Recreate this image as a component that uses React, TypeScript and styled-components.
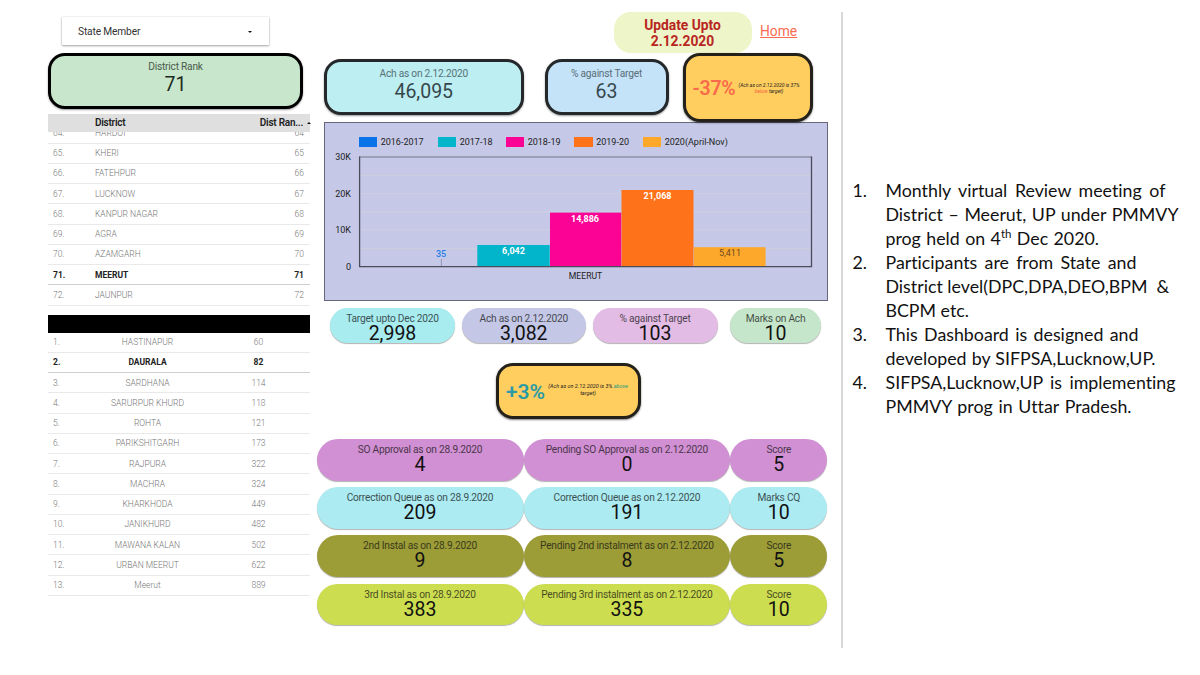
import React from "react";
import styled, { createGlobalStyle } from "styled-components";

const districts = [
  ["64.", "HARDOI", "64"],
  ["65.", "KHERI", "65"],
  ["66.", "FATEHPUR", "66"],
  ["67.", "LUCKNOW", "67"],
  ["68.", "KANPUR NAGAR", "68"],
  ["69.", "AGRA", "69"],
  ["70.", "AZAMGARH", "70"],
  ["71.", "MEERUT", "71"],
  ["72.", "JAUNPUR", "72"],
];

const blocks = [
  ["1.", "HASTINAPUR", "60"],
  ["2.", "DAURALA", "82"],
  ["3.", "SARDHANA", "114"],
  ["4.", "SARURPUR KHURD", "118"],
  ["5.", "ROHTA", "121"],
  ["6.", "PARIKSHITGARH", "173"],
  ["7.", "RAJPURA", "322"],
  ["8.", "MACHRA", "324"],
  ["9.", "KHARKHODA", "449"],
  ["10.", "JANIKHURD", "482"],
  ["11.", "MAWANA KALAN", "502"],
  ["12.", "URBAN MEERUT", "622"],
  ["13.", "Meerut", "889"],
];

const scores = [
  {
    color: "#d190d3",
    cells: [
      ["SO Approval as on 28.9.2020", "4"],
      ["Pending SO Approval as on 2.12.2020", "0"],
      ["Score", "5"],
    ],
  },
  {
    color: "#abebf1",
    cells: [
      ["Correction Queue as on 28.9.2020", "209"],
      ["Correction Queue as on 2.12.2020", "191"],
      ["Marks CQ", "10"],
    ],
  },
  {
    color: "#9d9d38",
    cells: [
      ["2nd Instal as on 28.9.2020", "9"],
      ["Pending 2nd instalment as on 2.12.2020", "8"],
      ["Score", "5"],
    ],
  },
  {
    color: "#cddd50",
    cells: [
      ["3rd Instal as on 28.9.2020", "383"],
      ["Pending 3rd instalment as on 2.12.2020", "335"],
      ["Score", "10"],
    ],
  },
];

const App = () => {
  return (
    <Page>
      <Global />
      <Left>
        <Select>
          State Member
          <Caret />
        </Select>
        <RankCard>
          <CardLabel>District Rank</CardLabel>
          <CardValue>71</CardValue>
        </RankCard>
        <TableHead>
          <span>District</span>
          <HeadRank>Dist Ran...</HeadRank>
          <SortMark />
        </TableHead>
        <DistrictList>
          {districts.map(([no, name, rank]) => (
            <DistrictRow key={no} $strong={name === "MEERUT"}>
              <span>{no}</span>
              <span>{name}</span>
              <Right>{rank}</Right>
            </DistrictRow>
          ))}
        </DistrictList>
        <BlackBar />
        {blocks.map(([no, name, rank]) => (
          <BlockRow key={no} $strong={name === "DAURALA"}>
            <span>{no}</span>
            <Center>{name}</Center>
            <Center>{rank}</Center>
          </BlockRow>
        ))}
      </Left>

      <Middle>
        <TopBar>
          <Update>
            Update Upto
            <br />
            2.12.2020
          </Update>
          <Home href="#">Home</Home>
        </TopBar>
        <Cards>
          <Card $width={199.5} $color="#bceef2">
            <CardLabel>Ach as on 2.12.2020</CardLabel>
            <CardValue>46,095</CardValue>
          </Card>
          <Card $width={124} $color="#c4e2f8">
            <CardLabel>% against Target</CardLabel>
            <CardValue>63</CardValue>
          </Card>
          <Delta $width={130.5} $height={69}>
            <DeltaValue $color="#f9694b">-37%</DeltaValue>
            <DeltaNote $width={67}>
              (Ach as on 2.12.2020 is 37% <Word $color="#f9593f">below</Word> target)
            </DeltaNote>
          </Delta>
        </Cards>
        <ChartBox>
          <Legend>
            <Key $width={79} $color="#0a73ea">2016-2017</Key>
            <Key $width={68} $color="#02b5cb">2017-18</Key>
            <Key $width={68.5} $color="#fb0496">2018-19</Key>
            <Key $width={68.5} $color="#fe7219">2019-20</Key>
            <Key $width={100} $color="#fda82b">2020(April-Nov)</Key>
          </Legend>
          <Chart />
        </ChartBox>
        <Pills>
          <Pill $width={125} $color="#a8ecf0">
            <PillLabel>Target upto Dec 2020</PillLabel>
            <PillValue>2,998</PillValue>
          </Pill>
          <Pill $width={124.5} $color="#c4c8e6">
            <PillLabel>Ach as on 2.12.2020</PillLabel>
            <PillValue>3,082</PillValue>
          </Pill>
          <Pill $width={125} $color="#e3bce5">
            <PillLabel>% against Target</PillLabel>
            <PillValue>103</PillValue>
          </Pill>
          <Pill $width={91} $color="#c5e6ca">
            <PillLabel>Marks on Ach</PillLabel>
            <PillValue>10</PillValue>
          </Pill>
        </Pills>
        <DeltaRow>
          <Delta $width={145} $height={55.5}>
            <DeltaValue $color="#2a9aa6" $large>+3%</DeltaValue>
            <DeltaNote $width={86} $large>
              (Ach as on 2.12.2020 is 3% <Word $color="#159a86">above</Word> target)
            </DeltaNote>
          </Delta>
        </DeltaRow>
        <Scores>
          {scores.map((row) =>
            row.cells.map(([label, value]) => (
              <Score key={row.color + label} $color={row.color}>
                <PillLabel>{label}</PillLabel>
                <PillValue>{value}</PillValue>
              </Score>
            ))
          )}
        </Scores>
      </Middle>

      <Notes>
        <Note>
          <span>1.</span>
          <div>
            <Line $width={280}>Monthly virtual Review meeting of</Line>
            <Line $width={293}>District – Meerut, UP under PMMVY</Line>
            <Line $width={213.5}>
              prog held on <Nth>4<sup>th</sup></Nth> Dec 2020.
            </Line>
          </div>
        </Note>
        <Note>
          <span>2.</span>
          <div>
            <Line $width={251}>Participants are from State and</Line>
            <Line $width={278}>District level(DPC,DPA,DEO,BPM &nbsp;&amp;</Line>
            <Line $width={83}>BCPM etc.</Line>
          </div>
        </Note>
        <Note>
          <span>3.</span>
          <div>
            <Line $width={253}>This Dashboard is designed and</Line>
            <Line $width={270}>developed by SIFPSA,Lucknow,UP.</Line>
          </div>
        </Note>
        <Note>
          <span>4.</span>
          <div>
            <Line $width={290}>SIFPSA,Lucknow,UP is implementing</Line>
            <Line $width={246}>PMMVY prog in Uttar Pradesh.</Line>
          </div>
        </Note>
      </Notes>
    </Page>
  );
};

const Chart = () => (
  <Plot viewBox="325 150 502 140">
    {[175.5, 193.5, 212, 230, 248.5].map((y) => (
      <path key={y} d={`M360 ${y}H811`} stroke="#cdcfdf" />
    ))}
    <path d="M359 157H812" stroke="#74768a" strokeWidth="1.2" />
    <rect x="477.3" y="245" width="72.4" height="21.5" fill="#02b5cb" />
    <rect x="550" y="212.6" width="71.3" height="54" fill="#fb0496" />
    <rect x="621.5" y="190" width="72" height="76.5" fill="#fe7219" />
    <rect x="694" y="247.2" width="71.6" height="19.5" fill="#fda82b" />
    <path d="M441.4 259v7" stroke="#9499b5" />
    <path d="M359.6 156.5V266.7H811.5V156.5" fill="none" stroke="#4a4c5c" strokeWidth="1.3" />
    <g textAnchor="end">
      <text x="351" y="160.2">30K</text>
      <text x="351" y="197">20K</text>
      <text x="351" y="233">10K</text>
      <text x="351" y="269.8">0</text>
    </g>
    <g textAnchor="middle">
      <text x="441" y="257" fill="#257fe8" fontWeight="500">35</text>
      <text x="513.5" y="254.3" fill="#fff" fontWeight="700">6,042</text>
      <text x="585" y="222.3" fill="#fff" fontWeight="700">14,886</text>
      <text x="657.5" y="199" fill="#fff" fontWeight="700">21,068</text>
      <text x="730" y="256" fill="#6b4a22">5,411</text>
      <text x="585.5" y="279" fontSize="8.6">MEERUT</text>
    </g>
  </Plot>
);

export default App;

const Global = createGlobalStyle`
  * {
    box-sizing: border-box;
  }
  body {
    margin: 0;
    background: #fff;
    font-family: Roboto, sans-serif;
  }
`;

const Page = styled.div`
  width: 1200px;
  height: 675px;
  display: flex;
  overflow: hidden;
`;

const Left = styled.div`
  width: 262px;
  margin-left: 48px;
  padding-top: 17px;
`;

const Select = styled.div`
  width: 207.5px;
  height: 28px;
  margin-left: 13.5px;
  padding: 1px 17px 0 16.5px;
  display: flex;
  align-items: center;
  justify-content: space-between;
  font-size: 10.2px;
  letter-spacing: -0.15px;
  color: #333;
  box-shadow: 0 1px 2px rgba(0, 0, 0, 0.35), 0 0 1px rgba(0, 0, 0, 0.2);
`;

const Caret = styled.i`
  border: 2px solid transparent;
  border-top-color: #111;
  border-bottom: 0;
`;

const Card = styled.div<{ $width: number; $color: string }>`
  width: ${(p) => p.$width}px;
  height: 55.5px;
  border: 3px solid #24282b;
  border-radius: 17px;
  background: ${(p) => p.$color};
  color: #36474c;
  display: flex;
  flex-direction: column;
  align-items: center;
  padding-top: 6px;
  box-shadow: 0 1px 2px rgba(0, 0, 0, 0.4);
`;

const RankCard = styled(Card).attrs({ $width: 255, $color: "#c7e6cc" })`
  margin-top: 8px;
  padding-top: 5px;
  border-color: #000;
  color: #1d2b20;
`;

const CardLabel = styled.div`
  font-size: 10.2px;
  line-height: 12px;
  letter-spacing: -0.23px;
  opacity: 0.75;
`;

const CardValue = styled.div`
  font-size: 19.5px;
  line-height: 24px;
`;

const TableHead = styled.div`
  height: 17.5px;
  margin-top: 5.5px;
  padding-left: 47px;
  display: flex;
  align-items: center;
  font-size: 10px;
  font-weight: 600;
  letter-spacing: -0.25px;
  color: #222;
  background: #dfdfdf;
`;

const HeadRank = styled.span`
  margin-left: auto;
`;

const SortMark = styled.i`
  margin: 1px -1px 0 4px;
  border: 2px solid transparent;
  border-bottom-color: #111;
  border-top: 0;
`;

const DistrictList = styled.div`
  height: 174px;
  overflow: hidden;
  display: flex;
  flex-direction: column;
  justify-content: flex-end;
`;

const Row = styled.div<{ $strong: boolean }>`
  flex: none;
  display: grid;
  align-items: center;
  height: 20.25px;
  padding-left: 5px;
  border-bottom: 1px solid ${(p) => (p.$strong ? "#cfcfcf" : "#e9e9e9")};
  font-size: 8.5px;
  font-weight: ${(p) => (p.$strong ? 700 : 300)};
  color: ${(p) => (p.$strong ? "#222" : "#777")};
`;

const DistrictRow = styled(Row)`
  grid-template-columns: 42px 1fr 40px;
  padding-right: 6px;
`;

const BlockRow = styled(Row)`
  grid-template-columns: 42px 105px 117px;
`;

const Right = styled.span`
  text-align: right;
`;

const Center = styled.span`
  text-align: center;
`;

const BlackBar = styled.div`
  height: 17.5px;
  margin-top: 9.5px;
  background: #000;
`;

const Middle = styled.div`
  width: 512px;
  margin-left: 6.5px;
  padding-top: 12px;
`;

const TopBar = styled.div`
  height: 41px;
  padding-left: 297px;
  display: flex;
  gap: 8.5px;
`;

const Update = styled.div`
  width: 138px;
  height: 40.5px;
  padding-top: 4.5px;
  border-radius: 17px;
  background: #eef5c8;
  color: #b92622;
  font-size: 13.8px;
  font-weight: 700;
  line-height: 16.5px;
  text-align: center;
`;

const Home = styled.a`
  margin-top: 11px;
  font-size: 13.8px;
  line-height: 17px;
  color: #f96a50;
`;

const Cards = styled.div`
  height: 69px;
  padding-left: 7.5px;
  display: flex;
  align-items: flex-start;

  ${Card} {
    margin-top: 6px;
    margin-right: 21px;
  }
  ${Card} + ${Card} {
    margin-right: 14px;
  }
`;

const Delta = styled.div<{ $width: number; $height: number }>`
  width: ${(p) => p.$width}px;
  height: ${(p) => p.$height}px;
  border: 3px solid #24211b;
  border-radius: 17px;
  background: #ffce5e;
  display: flex;
  align-items: center;
  padding: 2px 0 0 7px;
  box-shadow: 0 1px 2px rgba(0, 0, 0, 0.5);
`;

const DeltaValue = styled.div<{ $color: string; $large?: boolean }>`
  font-size: ${(p) => (p.$large ? 21 : 19.5)}px;
  font-weight: 600;
  letter-spacing: ${(p) => (p.$large ? 0 : -0.2)}px;
  color: ${(p) => p.$color};
`;

const DeltaNote = styled.div<{ $width: number; $large?: boolean }>`
  width: ${(p) => p.$width}px;
  flex: none;
  margin-top: ${(p) => (p.$large ? -4 : -2)}px;
  font-size: ${(p) => (p.$large ? 5.5 : 5)}px;
  font-style: italic;
  line-height: ${(p) => (p.$large ? 7 : 6)}px;
  text-align: center;
  color: #222;
`;

const Word = styled.span<{ $color: string }>`
  color: ${(p) => p.$color};
`;

const ChartBox = styled.div`
  width: 503.5px;
  height: 179px;
  margin-left: 7.5px;
  border: 1px solid #666779;
  background: #c5c9e7;
`;

const Legend = styled.div`
  height: 27px;
  padding: 13px 0 0 33.7px;
  display: flex;
`;

const Key = styled.div<{ $width: number; $color: string }>`
  width: ${(p) => p.$width}px;
  height: 12px;
  display: flex;
  align-items: center;
  gap: 3.5px;
  font-size: 9px;
  color: #222;
  white-space: nowrap;

  &::before {
    content: "";
    width: 18.5px;
    height: 9.5px;
    background: ${(p) => p.$color};
  }
`;

const Plot = styled.svg`
  display: block;
  width: 502px;
  height: 140px;
  font-family: Roboto, sans-serif;
  font-size: 9px;
  fill: #222;
`;

const Pills = styled.div`
  height: 36px;
  margin-top: 6.5px;
  padding-left: 13.5px;
  display: flex;
  gap: 6.5px;

  > :last-child {
    margin-left: 6px;
  }
`;

const Pill = styled.div<{ $width?: number; $color: string }>`
  width: ${(p) => p.$width}px;
  height: 35.5px;
  padding-top: 5px;
  border-radius: 21px;
  background: ${(p) => p.$color};
  color: #111;
  display: flex;
  flex-direction: column;
  align-items: center;
  box-shadow: 0 1px 1px rgba(0, 0, 0, 0.3);
`;

const PillLabel = styled.div`
  font-size: 10.2px;
  line-height: 12px;
  letter-spacing: -0.23px;
  opacity: 0.72;
  white-space: nowrap;
`;

const PillValue = styled.div`
  font-size: 19.5px;
  line-height: 17.5px;
`;

const DeltaRow = styled.div`
  height: 56px;
  margin: 19.5px 0 20px 179.5px;
`;

const Scores = styled.div`
  display: grid;
  grid-template-columns: 207px 206px 97px;
  grid-auto-rows: 42px;
  gap: 6.2px 0.4px;
`;

const Score = styled(Pill)`
  width: auto;
  height: 41.7px;
  padding-top: 5px;
`;

const Notes = styled.div`
  height: 636px;
  margin: 12px 0 0 12.5px;
  padding: 166px 0 0 9.5px;
  border-left: 2px solid #d9d9d9;
  font-family: Lato, sans-serif;
  font-size: 17.8px;
  font-variant-ligatures: none;
  line-height: 24px;
  color: #111;
`;

const Note = styled.div`
  display: grid;
  grid-template-columns: 33px 310px;
`;

const Line = styled.div<{ $width: number }>`
  width: ${(p) => p.$width}px;
  height: 24px;
  white-space: nowrap;
  text-align: justify;
  text-align-last: justify;
`;

const Nth = styled.span`
  sup {
    font-size: 11.5px;
    line-height: 0;
  }
`;
